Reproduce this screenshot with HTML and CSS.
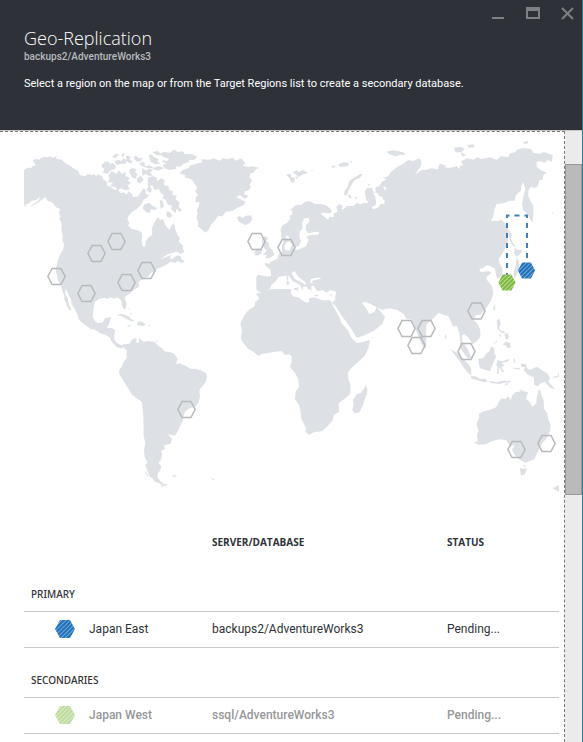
FILE: index.html
```html
<!DOCTYPE html>
<html lang="en">
<head>
<meta charset="utf-8">
<title>Geo-Replication</title>
<link rel="stylesheet" href="styles.css">
</head>
<body>
<div class="blade">
  <header class="blade-header">
    <div class="window-buttons">
      <button type="button" aria-label="Minimize"><svg viewBox="0 0 16 14"><path d="M1 12h12" stroke-width="2"/></svg></button>
      <button type="button" aria-label="Maximize"><svg viewBox="0 0 16 14"><path d="M2 2v10h12V2z" stroke-width="2"/><path d="M1 3h14" stroke-width="4"/></svg></button>
      <button type="button" aria-label="Close"><svg viewBox="0 0 16 14"><path d="M3 2l11 11M14 2L3 13" stroke-width="2"/></svg></button>
    </div>
    <h1>Geo-Replication</h1>
    <p class="subtitle">backups2/AdventureWorks3</p>
    <p class="intro">Select a region on the map or from the Target Regions list to create a secondary database.</p>
  </header>
  <div class="blade-body">
    <main class="content">
      <svg class="map" viewBox="24 140 535 355" role="img" aria-label="World map of regions">
        <defs>
          <pattern id="hatch-blue" width="3" height="3" patternUnits="userSpaceOnUse" patternTransform="rotate(45)">
            <rect width="3" height="3" fill="#1f6fba"/><rect width="1" height="3" fill="#77a9d7"/>
          </pattern>
          <pattern id="hatch-green" width="3" height="3" patternUnits="userSpaceOnUse" patternTransform="rotate(45)">
            <rect width="3" height="3" fill="#7cb83b"/><rect width="1" height="3" fill="#bbdc98"/>
          </pattern>
          <path id="hex" d="M-8.6 0L-4.4-8H4.4L8.6 0L4.4 8H-4.4Z"/>
        </defs>
        <!-- North America -->
        <g class="land" transform="translate(15 135) scale(.33333)">
          <path d="M27 106L38 98 48 99 54 92 64 91 57 84 53 75 66 71 71 74 86 65 99 67 105 63 113 68 124 64 124 71 140 74 152 85 165 92 175 100 190 108 195 120 210 124 218 117 232 121 235 116 243 124 248 118 262 124 264 132 275 140 276 152 288 156 300 165 309 162 315 174 326 172 335 179 341 169 352 178 354 187 370 184 378 170 386 160 393 167 392 178 402 178 398 187 387 193 378 210 366 222 352 230 342 241 337 252 343 263 340 272 350 281 366 286 380 292 382 305 380 320 384 336 391 333 392 320 399 308 412 300 410 280 419 262 427 247 436 254 445 253 449 266 455 275 463 285 470 270 477 265 481 283 487 299 495 310 491 320 505 333 500 345 480 352 460 356 445 366 438 372 456 365 469 360 465 369 471 372 480 365 489 361 497 364 500 373 510 380 500 384 488 378 480 384 467 380 452 391 438 397 425 402 421 410 410 412 400 425 389 428 379 435 371 441 372 456 360 463 350 470 342 478 333 482 329 491 335 505 333 519 327 524 322 514 318 495 307 487 297 491 285 487 279 492 268 488 252 492 240 500 235 525 233 545 240 559 250 565 264 562 269 550 287 546 283 565 276 579 289 579 300 585 297 610 305 624 319 631 329 627 342 638 334 644 322 636 320 641 305 636 290 620 285 608 271 599 256 595 240 584 227 582 211 571 190 552 188 541 178 520 170 508 168 493 160 480 156 469 151 463 151 477 158 490 162 510 168 522 165 527 156 514 153 503 147 491 149 484 143 470 138 450 128 435 122 405 126 385 132 365 143 346 148 330 142 316 143 305 139 280 140 265 133 251 137 244 131 233 136 222 123 217 113 204 98 197 91 186 80 195 66 205 45 217 54 208 70 197 76 185 65 194 49 198 43 205 34 208 27 213Z"/>
          <path d="M142 307L158 322 155 330 147 323ZM30 213L36 211 33 216ZM258 92L270 80 281 80 285 88 292 83 304 94 300 103 289 105 276 117 263 112 268 103ZM292 65L301 57 312 58 306 65 296 70ZM319 60L326 54 330 58 322 67ZM298 79L310 74 318 78 327 70 336 78 330 87 318 86 305 90ZM333 62L347 64 344 75 353 78 347 86 335 79ZM356 68L362 61 371 70 382 68 378 79 365 80ZM279 123L290 108 305 116 312 106 321 117 331 111 333 124 344 128 338 138 348 142 338 152 345 162 331 166 319 160 306 165 302 157 285 153 294 144 277 140 285 132ZM342 106L352 98 365 103 360 111 367 118 361 132 348 124ZM366 130L378 122 386 135 374 145 366 141ZM381 99L395 107 402 100 414 104 406 113 413 121 402 123 392 117 382 123ZM372 84L388 80 390 94 403 91 416 98 433 93 447 99 435 106 421 106 412 99 398 99 380 94ZM401 61L410 58 416 66 430 72 427 80 436 86 422 88 407 81ZM412 51L429 48 437 56 447 50 464 54 477 44 487 51 503 49 510 57 528 57 547 65 537 74 520 74 523 80 505 86 496 95 481 94 485 101 467 105 452 101 443 92 453 84 441 81 444 74 456 79 462 71 446 66 438 61 424 60ZM398 128L414 123 426 128 426 139 438 130 449 136 447 150 461 154 463 166 474 168 472 179 486 183 481 193 494 203 491 216 502 226 493 231 486 220 481 235 469 223 470 211 459 210 452 194 442 190 447 180 437 174 432 161 418 165 412 151 399 153ZM388 208L402 203 414 214 427 219 420 226 407 223 405 234 392 231 383 219ZM434 195L444 198 446 215 437 221ZM456 229L467 233 472 243 464 249 454 243ZM402 150L411 164 405 175 395 165ZM485 349L494 334 502 337 508 352 496 357ZM458 351L471 353 462 357Z"/>
          <path d="M305 541L320 536 339 543 349 552 360 558 347 559 334 551 318 543ZM367 560L378 559 392 568 386 573 366 571ZM337 571L348 571 344 575 337 574ZM400 571L408 572 400 574ZM340 520L344 519 342 526ZM346 532L351 535 348 540Z"/>
        </g>
        <!-- South America -->
        <g class="land" transform="translate(100 310) scale(.33333)">
          <path d="M70 108L79 101 89 101 94 91 106 84 110 89 108 97 116 100 118 84 130 95 148 93 163 96 175 107 188 116 194 124 216 128 223 132 233 147 228 162 240 160 252 166 263 170 270 176 286 176 302 181 319 190 321 201 317 217 306 230 298 240 300 260 295 278 288 288 270 294 255 305 250 319 248 333 239 350 229 372 224 377 204 373 216 387 212 401 192 406 195 416 182 424 187 431 183 450 175 458 184 468 181 480 174 490 172 502 180 512 191 522 203 523 192 529 177 520 163 514 158 506 147 497 143 483 136 466 142 457 134 440 132 420 136 400 131 378 130 320 126 276 110 265 95 253 86 238 75 220 67 207 57 190 59 177 66 169 72 154 80 145 80 121Z"/>
          <path d="M180 527L190 526 189 532ZM218 496L231 496 227 500 218 500ZM334 505L341 506 346 512 338 509ZM137 481L141 491 147 501 143 499 136 489ZM166 93L172 91 173 97ZM150 47L154 47 150 49Z"/>
        </g>
        <!-- Greenland, Europe and Asia -->
        <g transform="translate(190 135) scale(.33333)">
          <g class="land">
            <path d="M-32 114L-18 103-3 99-1 92 18 86 36 82 34 73 59 74 72 70 88 77 99 70 112 73 128 68 136 77 154 70 166 85 159 92 176 96 185 94 208 98 198 103 190 114 181 115 178 127 186 136 178 151 183 156 174 167 165 168 162 178 176 183 165 192 150 180 138 187 154 194 167 200 160 211 145 217 126 228 108 230 97 244 84 243 76 255 62 271 55 286 47 293 34 283 24 274 25 262 19 249 23 237 20 226 27 213 29 201 16 202 18 185 24 180 15 169 22 158 13 146 7 136-4 130-14 129-15 121Z"/>
            <path d="M-5 62L10 59 20 66 7 73-5 74ZM141 247L150 243 157 250 168 242 183 241 187 253 180 264 167 270 151 263 145 257ZM288 119L302 116 303 125 315 129 312 143 302 141 299 130ZM309 112L320 105 325 112 339 105 353 114 337 119 326 126ZM315 124L325 127 319 132ZM363 106L369 104 367 108ZM423 94L432 91 437 97 428 98ZM445 88L461 82 477 84 474 93 451 96ZM480 77L488 79 483 84ZM464 168L473 155 477 139 492 128 510 117 518 117 510 128 493 136 484 151 475 169 471 181 462 181ZM474 181L481 180 486 190 476 188ZM492 188L502 185 499 193ZM534 146L540 147 536 153ZM216 312L224 303 235 309 228 318 237 324 237 335 247 345 253 358 242 368 224 370 231 361 219 359 230 347 217 333ZM194 350L202 340 216 342 214 356 200 362 194 360ZM216 323L225 326 217 330Z"/>
            <path d="M345 201L359 198 374 207 393 207 408 211 422 222 426 232 414 235 398 233 392 236 405 247 415 255 417 245 431 247 431 235 443 231 439 216 447 207 458 212 454 224 462 221 471 213 490 213 500 204 511 208 522 204 535 204 528 191 524 171 530 160 546 159 551 171 562 178 555 193 570 194 581 204 585 205 576 185 557 180 556 157 568 153 576 140 589 133 579 128 594 124 603 110 623 95 640 86 655 75 670 78 688 70 695 80 691 97 674 119 695 104 707 105 724 100 744 103 749 86 766 91 767 98 781 98 801 94 808 103 810 90 819 93 813 79 833 70 851 74 861 66 873 73 899 67 920 74 933 64 955 67 961 55 976 52 980 45 998 39 1022 41 1031 54 1050 56 1061 51 1088 60 1086 80 1074 75 1065 83 1047 78 1040 82 1040 96 1053 106 1070 113 1060 120 1058 134 1048 136 1043 154 1032 160 1024 154 1015 166 1015 184 1022 198 1030 211 1030 238 1027 264 1018 249 1012 236 999 226 996 203 1001 182 1006 161 1000 141 994 153 993 167 978 180 974 197 957 197 944 204 920 207 914 221 909 246 903 257 921 258 935 255 944 264 953 282 954 317 946 340 934 361 926 372 929 386 937 400 937 420 924 431 919 424 915 401 899 393 891 390 876 401 868 400 872 411 899 409 904 414 889 426 893 438 906 453 910 475 903 497 889 519 871 540 858 540 850 555 863 567 871 586 871 606 860 619 847 628 842 616 832 605 823 597 815 602 818 621 831 638 840 656 843 670 832 670 819 650 809 636 811 610 806 590 801 572 789 575 782 557 774 543 759 539 746 533 729 551 710 568 708 590 709 619 706 641 696 631 687 609 679 589 671 568 663 551 656 553 646 549 642 538 624 526 600 520 576 524 560 517 544 508 525 500 515 503 527 518 538 537 553 531 560 516 585 545 577 567 552 587 520 602 500 608 486 585 470 562 457 545 438 515 425 502 435 496 438 470 421 465 410 473 398 465 382 469 370 451 366 437 391 431 394 429 381 428 363 432 360 442 375 449 363 455 365 466 353 461 345 440 326 427 313 408 305 415 314 431 333 441 353 454 339 455 337 467 331 451 308 438 296 422 279 423 265 427 258 438 245 449 239 462 225 471 209 471 199 464 199 426 205 419 232 425 243 423 242 406 224 389 226 383 238 387 243 380 262 371 266 357 276 351 276 332 281 320 273 301 272 282 278 270 291 264 302 249 297 243 307 239 307 226 300 225 318 211 334 209Z"/>
            <path d="M289 424L295 424 295 435 291 437ZM290 438L297 437 296 451 290 450ZM311 460L326 457 323 467 311 463ZM370 480L386 480 381 485ZM415 480L428 477 423 482ZM590 50L610 46 640 52 647 60 630 59 618 64 600 59ZM792 38L812 35 824 41 815 52 797 52ZM830 30L850 28 854 36 838 39ZM812 52L829 60 818 65ZM1000 20L1014 18 1015 25 1001 28ZM943 264L951 272 956 285 966 300 961 306 969 325 979 337 966 330 957 310 954 285ZM974 338L984 345 998 346 991 357 980 366 973 355ZM980 368L988 380 986 405 979 420 973 432 971 410 976 395ZM911 515L916 506 915 526 909 523ZM1044 217L1049 219ZM1058 219L1062 221ZM1086 231L1092 234 1087 236ZM950 475L955 477 951 480Z"/>
          </g>
          <path class="sea" d="M343 250L356 248 359 259 348 270 347 284 355 295 373 291 388 290 384 299 357 301 349 307 356 314 348 334 328 343 314 345 310 338 327 332 333 318 328 306 329 290 338 280 336 264ZM288 300L298 307 299 315 288 312ZM288 324L297 318 306 328 299 346 286 346 283 333ZM549 173L563 175 571 191 584 196 582 207 573 206 563 218 549 223 545 216 558 210 558 189ZM580 153L591 160 583 166ZM420 500L429 512 445 529 460 553 452 553 438 532Z"/>
        </g>
        <!-- Africa -->
        <g class="land" transform="translate(230 290) scale(.33333)">
          <path d="M78 12L94 7 119-2 153-3 184-3 182 9 188 19 208 23 222 35 236 38 238 25 253 22 276 31 302 31 309 48 325 76 335 100 354 121 363 142 377 156 380 160 400 155 420 150 415 175 404 198 384 216 363 235 353 249 356 270 362 285 361 311 348 323 326 339 327 365 311 376 308 391 291 410 276 424 251 427 238 434 227 427 228 413 214 387 211 360 206 343 195 327 197 305 207 290 205 268 195 248 179 230 185 216 185 199 177 193 164 194 155 183 137 185 114 189 96 192 85 198 70 185 54 176 40 159 32 145 36 123 31 100 43 76 55 60 74 49 76 37 88 25Z"/>
          <path d="M407 286L412 297 411 311 404 328 399 345 389 366 375 370 367 359 371 346 369 330 380 313 393 308 401 298ZM424 142L431 142 427 145ZM444 342L447 343 445 345ZM433 347L435 348Z"/>
        </g>
        <!-- Oceania and the Indonesian islands -->
        <g class="land" transform="translate(390 290) scale(.33333)">
          <path d="M252 458L264 453 260 436 266 424 260 402 267 383 267 371 278 365 298 359 315 354 323 345 326 336 335 325 347 327 355 318 362 331 367 316 376 307 392 304 387 298 401 304 414 306 408 326 419 336 427 351 439 340 440 324 446 300 450 298 455 318 461 330 462 356 472 370 475 388 482 405 480 424 470 444 455 463 445 483 433 508 417 514 408 518 390 510 376 498 366 479 375 463 361 471 354 460 348 450 329 448 304 454 288 463 266 464ZM389 534L400 537 411 534 405 552 393 557ZM488 595L507 585 507 606ZM400 524L408 527 403 532ZM182 178L201 188 213 200 225 212 237 224 244 236 244 256 233 248 220 231 207 211 192 192ZM242 258L257 259 269 266 286 267 292 274 285 277 267 272 245 266ZM294 274L306 274 319 277 338 272 363 272 360 277 336 278 332 282 305 280ZM340 287L357 277 353 284ZM265 207L280 204 289 190 299 184 303 169 313 174 313 192 319 198 310 218 300 244 288 240 270 235 266 220ZM322 210L336 214 359 206 356 214 334 219 343 225 335 233 344 248 336 245 329 232 325 252 320 251 323 235 319 225ZM392 221L408 223 411 235 421 239 440 230 451 237 473 252 480 265 475 274 486 287 496 298 481 294 464 275 451 280 446 288 433 285 431 262 414 255 400 240 407 232 394 230ZM370 209L374 205 377 218 373 219ZM364 233L391 234 388 239 375 236ZM488 260L502 258 508 246 507 260 495 265ZM320 91L328 87 333 100 327 113 332 122 342 124 346 130 334 128 323 117ZM326 132L334 135 331 142ZM344 132L354 130 357 145 347 149ZM338 164L348 154 361 160 362 173 353 174 347 166ZM307 164L321 151 321 155ZM166 132L170 138 168 149 165 144Z"/>
        </g>
        <path class="link" d="M507 278V215.5H527V265"/>
        <g class="region" stroke-width="1.5">
          <use href="#hex" x="56.5" y="276.5"/><use href="#hex" x="96.5" y="253.5"/><use href="#hex" x="116.5" y="241.5"/>
          <use href="#hex" x="86.5" y="293.5"/><use href="#hex" x="126.5" y="282.5"/><use href="#hex" x="146.5" y="270.5"/>
          <use href="#hex" x="256.5" y="241.5"/><use href="#hex" x="286.5" y="247.5"/><use href="#hex" x="186.5" y="409.5"/>
          <use href="#hex" x="406.5" y="328.5"/><use href="#hex" x="426.5" y="328.5"/><use href="#hex" x="416.5" y="345.5"/>
          <use href="#hex" x="466.5" y="351.5"/><use href="#hex" x="476.5" y="311"/><use href="#hex" x="516.5" y="449.5"/><use href="#hex" x="546.5" y="443.5"/>
        </g>
        <use href="#hex" x="526.5" y="270.5" fill="url(#hatch-blue)"/>
        <use href="#hex" x="507" y="282.5" fill="url(#hatch-green)"/>
      </svg>
      <table class="regions">
        <colgroup><col class="col-mark"><col class="col-region"><col class="col-server"><col></colgroup>
        <thead>
          <tr><td></td><td></td><th scope="col">SERVER/DATABASE</th><th scope="col">STATUS</th></tr>
        </thead>
        <tbody>
          <tr class="group"><th colspan="4" scope="rowgroup">PRIMARY</th></tr>
          <tr class="row">
            <td class="mark"><svg viewBox="-10 -9 20 18"><path fill="url(#hatch-blue)" d="M-10 0L-5-9H5L10 0L5 9H-5Z"/></svg></td>
            <td>Japan East</td><td>backups2/AdventureWorks3</td><td>Pending...</td>
          </tr>
        </tbody>
        <tbody>
          <tr class="group"><th colspan="4" scope="rowgroup">SECONDARIES</th></tr>
          <tr class="row muted">
            <td class="mark"><svg viewBox="-10 -9 20 18"><path fill="url(#hatch-green)" d="M-10 0L-5-9H5L10 0L5 9H-5Z"/></svg></td>
            <td>Japan West</td><td>ssql/AdventureWorks3</td><td>Pending...</td>
          </tr>
        </tbody>
      </table>
    </main>
    <div class="scrollbar" aria-hidden="true"><div class="thumb"></div></div>
  </div>
</div>
</body>
</html>
```
FILE: styles.css
```css
* { box-sizing: border-box; }
body {
  margin: 0;
  background: #fff;
  color: #2e3238;
  font-family: Roboto, "Noto Sans", sans-serif;
  font-size: 12px;
}
.blade {
  display: flex;
  flex-direction: column;
  min-height: 100vh;
  border-right: 1px solid #1b7fa5;
}
.blade-header {
  padding: 6px 7px 38px 24px;
  background: #2e3238;
  border-bottom: 1px solid #c8c8c8;
  color: #fff;
}
.window-buttons {
  display: flex;
  justify-content: flex-end;
  gap: 18px;
  height: 20px;
}
.window-buttons button {
  width: 16px;
  height: 14px;
  padding: 0;
  border: 0;
  background: none;
}
.window-buttons svg { display: block; fill: none; stroke: #7d8085; }
h1 {
  margin: 0;
  font-family: "Open Sans", sans-serif;
  font-size: 18px;
  font-weight: 300;
  line-height: 24px;
}
p { margin: 0; }
.subtitle { color: #b9bbbe; font-size: 10px; font-weight: 500; line-height: 14px; }
.intro { margin-top: 12px; font-size: 11px; line-height: 16px; }
.blade-body { display: flex; flex: 1; }
.content {
  flex: 1;
  min-width: 0;
  padding: 8px 5px 0 24px;
  border-top: 1px dashed #777;
  border-right: 1px dashed #777;
}
.map { display: block; width: 100%; height: auto; }
.land { fill: #dde0e5; }
.sea { fill: #fff; }
.link { fill: none; stroke: #3f80bb; stroke-width: 2; stroke-dasharray: 5 5; }
.region { fill: none; stroke: #b7b9bb; }
.scrollbar {
  display: flex;
  flex-direction: column;
  width: 17px;
  background: #ebebeb;
}
.scrollbar::before { content: ""; flex: 33; }
.scrollbar::after { content: ""; flex: 248; }
.thumb { flex: 330; background: #bababa; border: 1px solid #999; }
.regions {
  width: 100%;
  margin-top: 28px;
  border-collapse: collapse;
  table-layout: fixed;
}
.col-mark { width: 65px; }
.col-region { width: 123px; }
.col-server { width: 235px; }
.regions th, .regions td { padding: 0; text-align: left; }
thead th { height: 38px; font-family: "Open Sans", sans-serif; font-size: 10px; font-weight: 700; }
.group th {
  height: 50px;
  padding: 0 7px 10px;
  border-bottom: 1px solid #c8c8c8;
  font-family: "Noto Sans", sans-serif;
  font-size: 10px;
  font-weight: 500;
  line-height: 14px;
  vertical-align: bottom;
}
.row td { height: 36px; border-bottom: 1px solid #c8c8c8; }
.regions .mark { padding-left: 31px; }
.mark svg { display: block; width: 20px; height: 18px; }
.muted { color: #95979a; font-weight: 500; }
.muted svg { opacity: .5; }
```
